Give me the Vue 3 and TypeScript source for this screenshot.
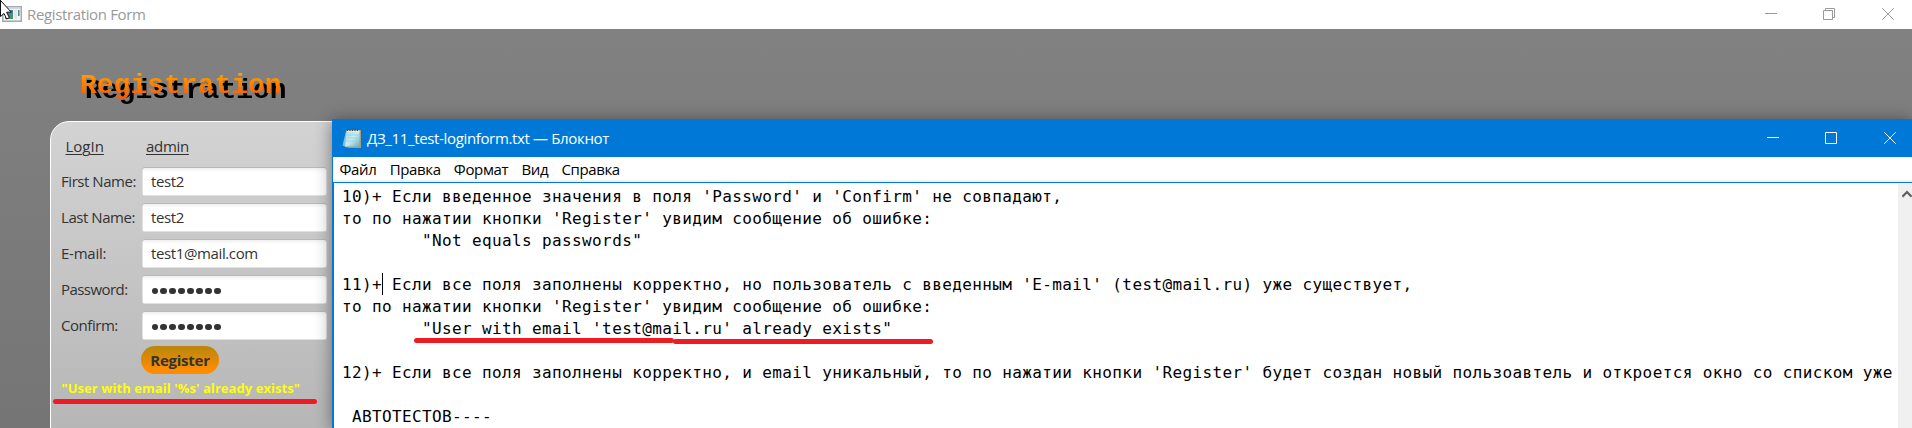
<script setup lang="ts">
interface Field {
  label: string
  value: string
  spacing: string
  secret?: boolean
}

const fields: Field[] = [
  { label: 'First Name:', value: 'test2', spacing: '-0.45px' },
  { label: 'Last Name:', value: 'test2', spacing: '-0.45px' },
  { label: 'E-mail:', value: 'test1@mail.com', spacing: '-0.25px' },
  { label: 'Password:', value: '', spacing: '-0.55px', secret: true },
  { label: 'Confirm:', value: '', spacing: '-0.45px', secret: true },
]

const menu = ['Файл', 'Правка', 'Формат', 'Вид', 'Справка']

const noteText = [
  "10)+ Если введенное значения в поля 'Password' и 'Confirm' не совпадают,",
  "то по нажатии кнопки 'Register' увидим сообщение об ошибке:",
  '        "Not equals passwords"',
  '',
  "11)+ Если все поля заполнены корректно, но пользователь с введенным 'E-mail' (test@mail.ru) уже существует,",
  "то по нажатии кнопки 'Register' увидим сообщение об ошибке:",
  "        \"User with email 'test@mail.ru' already exists\"",
  '',
  "12)+ Если все поля заполнены корректно, и email уникальный, то по нажатии кнопки 'Register' будет создан новый пользоавтель и откроется окно со списком уже",
  '',
  ' АВТОТЕСТОВ----',
].join('\n')
</script>

<template>
  <div class="desktop">
    <header class="app-bar">
      <svg class="app-icon" width="20" height="16" viewBox="0 0 20 16">
        <defs>
          <linearGradient id="pane" x1="0" y1="0" x2="0" y2="1">
            <stop offset="0" stop-color="#4a7fb0" />
            <stop offset="1" stop-color="#3f9a62" />
          </linearGradient>
        </defs>
        <rect x="0.75" y="0.75" width="18.5" height="14.5" fill="#f4f5f6" stroke="#a3a9ad" stroke-width="1.5" />
        <rect x="1.5" y="1.5" width="17" height="1.5" fill="#d3d8db" />
        <rect x="3" y="4" width="8" height="9" fill="url(#pane)" />
        <rect x="12" y="4" width="3" height="9" fill="#e4e6e7" />
        <rect x="16" y="4" width="1.5" height="6" fill="url(#pane)" />
      </svg>
      <span class="app-title">Registration Form</span>
      <div class="controls grey">
        <svg width="12" height="12" viewBox="0 0 12 12"><path d="M0 5.5H12" /></svg>
        <svg width="12" height="12" viewBox="0 0 12 12"><path d="M0.5 2.5H9.5V11.5H0.5ZM2.5 2.5V0.5H11.5V9.5H9.5" /></svg>
        <svg width="12" height="12" viewBox="0 0 12 12"><path d="M0.3 0.3L11.7 11.7M11.7 0.3L0.3 11.7" /></svg>
      </div>
    </header>

    <main class="app-body">
      <h1 class="heading">Registration</h1>
      <section class="panel">
        <nav class="links">
          <a>LogIn</a>
          <a>admin</a>
        </nav>
        <div v-for="field in fields" :key="field.label" class="row">
          <label class="label" :style="{ letterSpacing: field.spacing }">{{ field.label }}</label>
          <div class="input">
            <span v-if="field.secret" class="dots"><i v-for="n in 8" :key="n"></i></span>
            <template v-else>{{ field.value }}</template>
          </div>
        </div>
        <button class="register">Register</button>
        <p class="message">"User with email '%s' already exists"</p>
      </section>
    </main>

    <section class="notepad">
      <header class="note-bar">
        <svg class="note-icon" width="20" height="21" viewBox="0 0 20 21">
          <defs>
            <linearGradient id="sheet" x1="0" y1="0" x2="1" y2="1">
              <stop offset="0" stop-color="#a9dce8" />
              <stop offset="0.5" stop-color="#c9edf3" />
              <stop offset="1" stop-color="#64b1c3" />
            </linearGradient>
          </defs>
          <path d="M4 3L0.5 17.5L5 19.5Z" fill="#7fc0d8" />
          <path d="M4.5 2H19V20H7L3 18.5Z" fill="#a69b83" />
          <path d="M4.5 2.5H17.6V18.5H3Z" fill="url(#sheet)" />
          <path d="M5 7H17M5 10H17M4.5 13H17" stroke="#8ecbd8" stroke-width="0.7" />
          <path d="M5.5 0.5V3.5M8 0.5V3.5M10.5 0.5V3.5M13 0.5V3.5M15.5 0.5V3.5" stroke="#4b5358" stroke-width="1.1" />
          <path d="M5 3.5H17.5" stroke="#e9f5f5" stroke-width="0.8" />
        </svg>
        <span class="note-title">ДЗ_11_test-loginform.txt — Блокнот</span>
        <div class="controls white">
          <svg width="12" height="12" viewBox="0 0 12 12"><path d="M0 5.5H12" /></svg>
          <svg width="12" height="12" viewBox="0 0 12 12"><path d="M0.5 0.5H11.5V11.5H0.5Z" /></svg>
          <svg width="12" height="12" viewBox="0 0 12 12"><path d="M0.3 0.3L11.7 11.7M11.7 0.3L0.3 11.7" /></svg>
        </div>
      </header>
      <nav class="menu">
        <span v-for="item in menu" :key="item">{{ item }}</span>
      </nav>
      <div class="editor">
        <pre class="text">{{ noteText }}</pre>
        <div class="scrollbar">
          <svg width="10" height="8" viewBox="0 0 10 8"><path d="M0.4 6.6L5 2L9.6 6.6" fill="none" stroke="#606060" stroke-width="2.2" /></svg>
        </div>
        <span class="caret"></span>
      </div>
    </section>

    <svg class="marks" width="1912" height="428" viewBox="0 0 1912 428">
      <path d="M55.5 401.5H314.5" />
      <path d="M416.5 340.5H671.5" />
      <path d="M675.5 341.5H930.5" />
    </svg>
    <svg class="cursor" width="13" height="20" viewBox="0 0 13 20">
      <path d="M-4.5 -5L11.3 12.2H6.6L9.4 17.6L6.6 19L4 13.4L0.5 16.6V-2" />
    </svg>
  </div>
</template>

<style>
body {
  margin: 0;
  overflow: hidden;
}
</style>

<style scoped>
.desktop {
  position: relative;
  display: flex;
  flex-direction: column;
  width: 1912px;
  height: 428px;
  overflow: hidden;
  font: 15px/20px "Open Sans", "Noto Sans", sans-serif;
  color: #333;
}
.app-bar {
  display: flex;
  flex: none;
  align-items: center;
  box-sizing: border-box;
  height: 29px;
  padding-left: 2px;
  background: #fff;
}
.app-icon {
  margin-top: -2px;
}
.app-title {
  margin: -2px 0 0 5px;
  letter-spacing: -0.36px;
  color: #999;
}
.controls {
  display: flex;
  gap: 47px;
  margin-left: auto;
}
.controls svg:first-child {
  margin-right: -1px;
}
.controls path {
  fill: none;
  stroke-width: 1;
}
.grey {
  margin-right: 18px;
  margin-top: -1px;
}
.grey path {
  stroke: #999;
}
.white {
  margin-right: 16px;
}
.white path {
  stroke: #fff;
}
.app-body {
  display: flex;
  flex: 1;
  flex-direction: column;
  min-height: 0;
  background: linear-gradient(#818181, #757575);
}
.heading {
  width: max-content;
  height: 32px;
  margin: 41px 0 19px 80px;
  font: bold 28px/32px "Liberation Mono", "Courier New", monospace;
  color: transparent;
  background: linear-gradient(#ffa000 10%, #ff5500 90%);
  -webkit-background-clip: text;
  background-clip: text;
  filter: drop-shadow(5px 5px 0 #000);
}
.panel {
  flex: none;
  box-sizing: border-box;
  width: 700px;
  height: 420px;
  margin-left: 50px;
  padding: 14px 0 0 10px;
  border: 1px solid #fff;
  border-radius: 19px;
  background: linear-gradient(#d3d3d3, #acacac);
}
.links {
  display: flex;
  height: 20px;
  margin: 0 0 11px 4.5px;
}
.links a {
  text-decoration: underline;
  text-underline-offset: 2px;
  text-decoration-thickness: 1px;
}
.links a:first-child {
  width: 80.5px;
}
.links a:last-child {
  letter-spacing: -0.3px;
}
.row {
  display: flex;
  width: 266px;
  height: 29px;
  margin-bottom: 7px;
  line-height: 29px;
}
.label {
  width: 80.5px;
  white-space: nowrap;
}
.input {
  flex: 1;
  box-sizing: border-box;
  padding-left: 9.5px;
  border-radius: 3px;
  background: linear-gradient(#ececec, #fff 5px);
  box-shadow: inset 0 1px 0 #b9b9b9, inset 0 0 0 0.5px #c4c4c4;
  letter-spacing: -0.38px;
}
.dots {
  display: flex;
  align-items: center;
  gap: 2.6px;
  height: 32px;
  padding-left: 0.5px;
}
.dots i {
  width: 6.4px;
  height: 6.4px;
  border-radius: 50%;
  background: #333;
}
.register {
  display: block;
  width: 78px;
  height: 28px;
  margin: -1px 0 0 80px;
  padding: 0 0 1px;
  border: 0;
  border-radius: 14px;
  background: linear-gradient(#b8860b, #ff8c00 85%);
  font: bold 15px/26px "Open Sans", "Noto Sans", sans-serif;
  letter-spacing: -0.25px;
  color: #333;
}
.message {
  margin: 4px 0 0 0.5px;
  font-size: 13px;
  font-weight: bold;
  letter-spacing: 0.06px;
  color: #ff0;
}
.notepad {
  position: absolute;
  left: 332px;
  top: 119px;
  display: flex;
  flex-direction: column;
  box-sizing: border-box;
  width: 1580px;
  height: 309px;
  border-left: 1px solid #0078d7;
  background: #fff;
  box-shadow: 0 2px 16px rgba(0, 0, 0, 0.45);
  color: #000;
}
.note-bar {
  display: flex;
  flex: none;
  align-items: center;
  height: 38px;
  padding-left: 9px;
  background: #0078d7;
}
.note-title {
  margin-left: 5px;
  letter-spacing: -0.35px;
  color: #fff;
}
.menu {
  display: flex;
  flex: none;
  gap: 13.2px;
  box-sizing: border-box;
  height: 25px;
  padding: 2px 0 0 6.5px;
  border-bottom: 2px solid #f0f0f0;
  letter-spacing: -0.36px;
}
.editor {
  position: relative;
  display: flex;
  flex: 1;
  min-height: 0;
  border-top: 1px solid #0078d7;
  border-left: 1px solid #0078d7;
}
.text {
  flex: 1;
  min-width: 0;
  margin: 3px 0 0 8px;
  overflow: hidden;
  font: 16px/22px "DejaVu Sans Mono", "Liberation Mono", monospace;
  letter-spacing: 0.372px;
  white-space: pre;
}
.scrollbar {
  flex: none;
  width: 14px;
  margin-top: 1px;
  background: #f0f0f0;
}
.scrollbar svg {
  display: block;
  margin: 6px 0 0 4px;
}
.caret {
  position: absolute;
  left: 48px;
  top: 90px;
  width: 1px;
  height: 22px;
  background: #000;
}
.marks,
.cursor {
  position: absolute;
  left: 0;
  top: 0;
}
.marks path {
  fill: none;
  stroke: #ed1c24;
  stroke-width: 5;
  stroke-linecap: round;
}
.cursor path {
  fill: #fff;
  stroke: #111;
  stroke-width: 1;
}
</style>
